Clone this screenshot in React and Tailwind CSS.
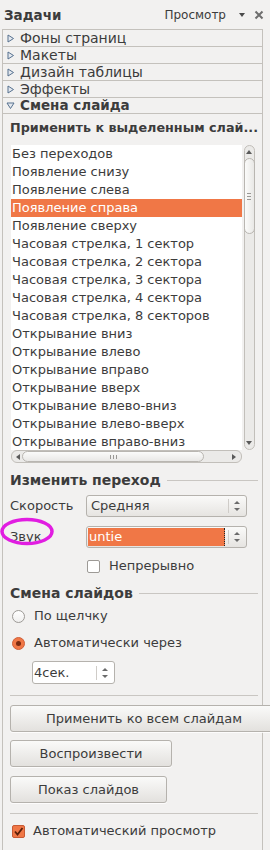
import React from 'react';

const effects = [
  'Без переходов',
  'Появление снизу',
  'Появление слева',
  'Появление справа',
  'Появление сверху',
  'Часовая стрелка, 1 сектор',
  'Часовая стрелка, 2 сектора',
  'Часовая стрелка, 3 сектора',
  'Часовая стрелка, 4 сектора',
  'Часовая стрелка, 8 секторов',
  'Открывание вниз',
  'Открывание влево',
  'Открывание вправо',
  'Открывание вверх',
  'Открывание влево-вниз',
  'Открывание влево-вверх',
  'Открывание вправо-вниз',
];

const decks = ['Фоны страниц', 'Макеты', 'Дизайн таблицы', 'Эффекты'];

function Tri({ open }) {
  return (
    <svg width="9" height="9" viewBox="0 0 9 9" className="shrink-0">
      {open ? (
        <polygon points="1,2 8,2 4.5,7.5" fill="#e4e9ef" stroke="#56708f" strokeWidth="1" />
      ) : (
        <polygon points="2,1 2,8 7.5,4.5" fill="#e4e9ef" stroke="#56708f" strokeWidth="1" />
      )}
    </svg>
  );
}

function SpinArrows() {
  return (
    <div className="flex items-center h-full">
      <div className="w-px h-[14px] bg-[#cfccc8]" />
      <svg width="16" height="14" viewBox="0 0 16 14">
        <polygon points="5,5 11,5 8,2" fill="#6b6b6b" />
        <polygon points="5,9 11,9 8,12" fill="#6b6b6b" />
      </svg>
    </div>
  );
}

function Legend({ children }) {
  return (
    <div className="flex items-center gap-[6px] h-[20px] pr-[4px]">
      <span className="font-bold text-[14px] whitespace-nowrap">{children}</span>
      <div className="flex-1 h-px bg-[#c9c6c2]" />
    </div>
  );
}

function Button({ w, children }) {
  return (
    <div
      className={`${w} h-[27px] ml-[6px] shrink-0 flex items-center justify-center rounded-[3px] border border-[#b5b2ad] bg-gradient-to-b from-[#fafaf9] to-[#e3e1de] shadow-[0_1px_0_rgba(255,255,255,0.8)] whitespace-nowrap`}
    >
      {children}
    </div>
  );
}

export default function App() {
  return (
    <div className="relative w-[270px] h-[850px] overflow-hidden bg-[#f2f1f0] text-[13px] leading-[18px] text-[#3c3c3c] font-['DejaVu_Sans',sans-serif]">
      {/* Title bar */}
      <div className="flex items-center h-[29px] pl-[4px] pr-[6px]">
        <span className="font-bold text-[13.5px]">Задачи</span>
        <span className="ml-auto text-[12px]">Просмотр</span>
        <svg width="8" height="6" viewBox="0 0 8 6" className="ml-[12px]">
          <polygon points="1,1 7,1 4,5" fill="#4a4a4a" />
        </svg>
        <svg width="10" height="10" viewBox="0 0 10 10" className="ml-[8px]">
          <path d="M1.5 1.5 L8.5 8.5 M8.5 1.5 L1.5 8.5" stroke="#6e6e6e" strokeWidth="2" />
        </svg>
      </div>

      {/* Panel */}
      <div className="ml-[2px] w-[261px] border-x border-[#c4c1bc] h-[821px]">
        {decks.map((d) => (
          <div key={d} className="flex items-center gap-[5px] h-[17px] pl-[3px] border-t border-[#c4c1bc] leading-[16px] text-[14px]">
            <Tri />
            <span>{d}</span>
          </div>
        ))}
        <div className="flex items-center gap-[5px] h-[17px] pl-[3px] border-y border-[#c4c1bc] font-bold leading-[15px] text-[13.5px]">
          <Tri open />
          <span>Смена слайда</span>
        </div>

        <div className="pl-[7px]">
          <div className="pt-[5px] h-[31px] font-bold text-[12.75px] whitespace-nowrap">Применить к выделенным слай...</div>

          {/* List */}
          <div className="ml-[1px] w-[244px] h-[318px] flex flex-col">
            <div className="flex h-[305px]">
              <div className="w-[231px] bg-white overflow-hidden">
                {effects.map((e, i) => (
                  <div
                    key={e}
                    className={`h-[18px] pl-[1px] whitespace-nowrap ${i === 3 ? 'bg-[#f07746] text-white' : ''}`}
                  >
                    {e}
                  </div>
                ))}
              </div>
              <div className="w-[13px] flex flex-col items-center pl-[1px]">
                <div className="w-[11px] h-full rounded-[6px] border border-[#c2bfba] bg-[#ebeae8] flex flex-col items-center">
                  <svg width="8" height="8" viewBox="0 0 8 8" className="mt-[2px]">
                    <polygon points="1,6 7,6 4,2" fill="#5a5a5a" />
                  </svg>
                  <div className="w-[11px] h-[76px] mt-[2px] rounded-[6px] border border-[#b9b6b1] bg-gradient-to-r from-[#fbfbfa] to-[#e9e8e6] flex flex-col items-center justify-center gap-[2px]">
                    <div className="w-[4px] h-px bg-[#9a9895]" />
                    <div className="w-[4px] h-px bg-[#9a9895]" />
                    <div className="w-[4px] h-px bg-[#9a9895]" />
                  </div>
                  <svg width="8" height="8" viewBox="0 0 8 8" className="mt-auto mb-[2px]">
                    <polygon points="1,2 7,2 4,6" fill="#5a5a5a" />
                  </svg>
                </div>
              </div>
            </div>
            <div className="flex h-[13px]">
              <div className="w-[231px] h-[13px] rounded-[6px] border border-[#c2bfba] bg-[#ebeae8] flex items-center">
                <svg width="8" height="8" viewBox="0 0 8 8" className="ml-[2px] shrink-0">
                  <polygon points="6,1 6,7 2,4" fill="#5a5a5a" />
                </svg>
                <div className="w-[182px] h-[11px] rounded-[6px] border border-[#b9b6b1] bg-gradient-to-b from-[#fbfbfa] to-[#e9e8e6] flex items-center justify-center gap-[2px]">
                  <div className="w-px h-[4px] bg-[#9a9895]" />
                  <div className="w-px h-[4px] bg-[#9a9895]" />
                  <div className="w-px h-[4px] bg-[#9a9895]" />
                </div>
                <svg width="8" height="8" viewBox="0 0 8 8" className="ml-auto mr-[3px] shrink-0">
                  <polygon points="2,1 2,7 6,4" fill="#5a5a5a" />
                </svg>
              </div>
            </div>
          </div>

          <div className="h-[7px]" />
          <Legend>Изменить переход</Legend>

          <div className="flex items-center h-[22px] mt-[5px]">
            <span className="w-[76px]">Скорость</span>
            <div className="w-[161px] h-[22px] rounded-[3px] border border-[#b5b2ad] bg-gradient-to-b from-[#fafaf9] to-[#e6e4e1] flex items-center pl-[4px] pr-[1px]">
              <span className="flex-1">Средняя</span>
              <SpinArrows />
            </div>
          </div>

          <div className="flex items-center h-[22px] mt-[9px]">
            <span className="w-[76px]">Звук</span>
            <div className="w-[161px] h-[22px] rounded-[3px] border border-[#b5b2ad] bg-gradient-to-b from-[#fafaf9] to-[#e6e4e1] flex items-center pl-[1px] pr-[1px]">
              <div className="w-[137px] h-[18px] bg-[#f07746] text-white pl-[1px] border-r border-dotted border-[#222]">
                untie
              </div>
              <div className="flex-1" />
              <SpinArrows />
            </div>
          </div>

          <div className="flex items-center h-[18px] mt-[9px] pl-[77px] gap-[9px]">
            <div className="w-[13px] h-[13px] rounded-[2px] border border-[#9d9a96] bg-white" />
            <span>Непрерывно</span>
          </div>

          <div className="h-[8px]" />
          <Legend>Смена слайдов</Legend>

          <div className="flex items-center h-[18px] mt-[4px] pl-[2px] gap-[9px]">
            <div className="w-[13px] h-[13px] rounded-full border border-[#9d9a96] bg-gradient-to-b from-white to-[#f0efee]" />
            <span>По щелчку</span>
          </div>
          <div className="flex items-center h-[18px] mt-[9px] pl-[2px] gap-[9px]">
            <div className="w-[13px] h-[13px] rounded-full border border-[#d0603a] bg-[#f07746] flex items-center justify-center">
              <div className="w-[5px] h-[5px] rounded-full bg-[#7a2a10]" />
            </div>
            <span>Автоматически через</span>
          </div>

          <div className="ml-[22px] mt-[9px] w-[83px] h-[23px] rounded-[3px] border border-[#b5b2ad] bg-white flex items-center pr-[1px]">
            <span className="flex-1 pl-[1px]">4сек.</span>
            <SpinArrows />
          </div>

          <div className="mt-[11px] mr-[4px] h-px bg-[#c9c6c2]" />

          <div className="flex flex-col gap-[8px] mt-[9px] -ml-[6px]">
            <Button w="w-[268px]">Применить ко всем слайдам</Button>
            <Button w="w-[162px]">Воспроизвести</Button>
            <div className="mt-px">
              <Button w="w-[157px]">Показ слайдов</Button>
            </div>
          </div>

          <div className="mt-[10px] mr-[4px] h-px bg-[#c9c6c2]" />

          <div className="flex items-center h-[18px] mt-[8px] pl-[2px] gap-[8px]">
            <div className="w-[13px] h-[13px] rounded-[2px] border border-[#c85a34] bg-[#f07746] flex items-center justify-center">
              <svg width="11" height="11" viewBox="0 0 11 11">
                <path d="M2 5.5 L4.5 8.5 L9.5 2" fill="none" stroke="#5a1e08" strokeWidth="1.8" />
              </svg>
            </div>
            <span>Автоматический просмотр</span>
          </div>
        </div>
      </div>

      {/* Magenta annotation around "Звук" */}
      <svg className="absolute left-0 top-[517px]" width="56" height="30" viewBox="0 0 56 30">
        <ellipse cx="27" cy="14.5" rx="25" ry="12" fill="none" stroke="#e11de1" strokeWidth="3.5" />
      </svg>
    </div>
  );
}
